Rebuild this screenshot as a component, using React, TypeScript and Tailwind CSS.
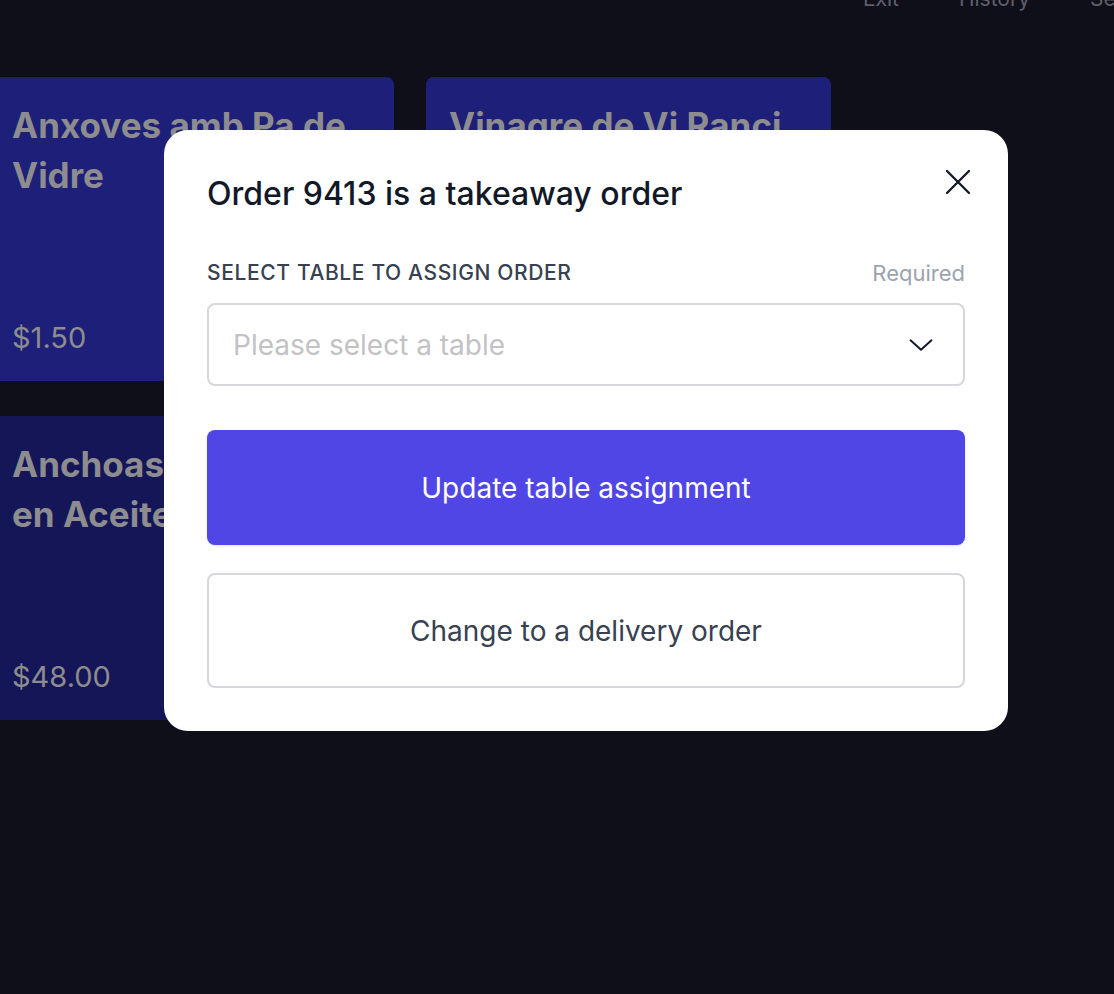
import React from "react";

const cards = [
  { title: "Anxoves amb Pa de Vidre", price: "$1.50", bg: "bg-[#1e1f78]" },
  { title: "Vinagre de Vi Ranci", price: "$6.50", bg: "bg-[#1e1f78]" },
  { title: "Anchoas de Santoña en Aceite de Oliva", price: "$48.00", bg: "bg-[#151657]" },
  { title: "Olives Arbequines", price: "$4.00", bg: "bg-[#151657]" },
];

export default function App() {
  return (
    <div
      className="relative h-[994px] w-[1114px] overflow-hidden bg-[#0f0f19]"
      style={{ fontFamily: "Inter, 'Noto Sans', sans-serif" }}
    >
      <div className="mt-[-15px] flex h-[28px] justify-end gap-[60px] text-[21px] leading-[28px] text-[#5f606a]">
        <span>Exit</span>
        <span>History</span>
        <span className="w-[24px] overflow-hidden">Settings</span>
      </div>
      <div className="ml-[-11px] mt-[64px] grid w-[842px] grid-cols-2 gap-x-[32px] gap-y-[35px]">
        {cards.map((c) => (
          <div
            key={c.title}
            className={`flex h-[304px] flex-col justify-between rounded-[8px] p-[23px] ${c.bg}`}
          >
            <div className="text-[35px] font-bold leading-[50px] text-[#8d8d8f]">{c.title}</div>
            <div className="text-[29px] leading-[40px] text-[#8d8d8f]">{c.price}</div>
          </div>
        ))}
      </div>

      <div className="absolute inset-0">
        <div className="ml-[164px] mt-[130px] w-[844px] rounded-[24px] bg-white px-[43px] pb-[43px] pt-[44px]">
          <div className="flex items-start justify-between">
            <h2 className="text-[32px] font-medium leading-[40px] text-[#111827]">
              Order 9413 is a takeaway order
            </h2>
            <button className="mr-[-6px] mt-[-5px] text-[#111827]">
              <svg width="26" height="26" viewBox="0 0 26 26" fill="none" stroke="currentColor" strokeWidth="2.3" strokeLinecap="round">
                <path d="M2 2l22 22M24 2L2 24" />
              </svg>
            </button>
          </div>
          <div className="mt-[47px] flex items-center justify-between leading-[24px]">
            <span className="text-[21px] font-medium uppercase tracking-[0.03em] text-[#374151]">
              Select table to assign order
            </span>
            <span className="text-[22px] text-[#9ca3af]">Required</span>
          </div>
          <div className="mt-[18px] flex h-[83px] items-center justify-between rounded-[8px] border-2 border-[#d6d7db] pl-[24px] pr-[28px]">
            <span className="text-[28px] text-[#c2c2c5]">Please select a table</span>
            <svg width="28" height="28" viewBox="0 0 24 24" fill="none" stroke="#111827" strokeWidth="1.7" strokeLinecap="round" strokeLinejoin="round">
              <path d="M3 8l9 8 9-8" />
            </svg>
          </div>
          <button className="mt-[44px] flex h-[115px] w-full items-center justify-center rounded-[8px] bg-[#4f46e5] text-[28px] text-white shadow-sm">
            Update table assignment
          </button>
          <button className="mt-[28px] flex h-[115px] w-full items-center justify-center rounded-[8px] border-2 border-[#d6d7db] bg-white text-[28px] text-[#374151]">
            Change to a delivery order
          </button>
        </div>
      </div>
    </div>
  );
}
